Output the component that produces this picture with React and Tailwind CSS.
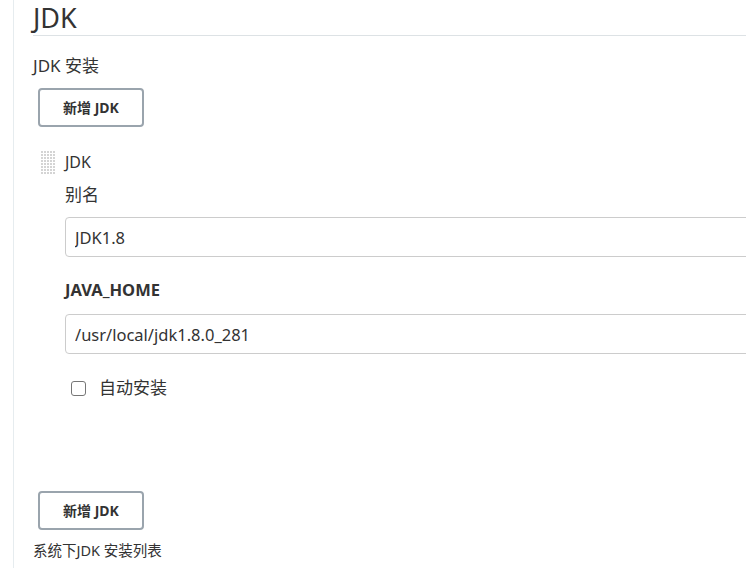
import React from 'react';

const DragHandle = () => (
  <svg width="14" height="24" viewBox="0 0 14 24" className="shrink-0">
    {Array.from({ length: 8 }).map((_, r) =>
      Array.from({ length: 5 }).map((_, c) => (
        <rect key={`${r}-${c}`} x={c * 3} y={r * 3} width="2" height="2" fill="#d4d4d4" />
      ))
    )}
  </svg>
);

const AddButton = () => (
  <button className="w-[106px] h-[39px] border-2 border-[#9aa4ad] rounded-[4px] bg-white text-[14px] font-bold text-[#333]">
    新增 JDK
  </button>
);

export default function App() {
  return (
    <div
      className="w-[746px] h-[568px] overflow-hidden bg-white flex text-[#333]"
      style={{ fontFamily: '"Noto Sans", "Noto Sans CJK SC", sans-serif' }}
    >
      <div className="w-[14px] shrink-0 border-r border-[#e6ecef]" />
      <div className="flex-1 pl-[19px] min-w-0">
        {/* Header */}
        <h1 className="text-[27px] leading-[35px] border-b border-[#dde2e5] w-[800px]">JDK</h1>
        <div className="mt-[19px] text-[17px] leading-[22px]">JDK 安装</div>
        <div className="mt-[11px] pl-[5px]">
          <AddButton />
        </div>

        {/* JDK entry */}
        <div className="mt-[24px] flex pl-[8px]">
          <DragHandle />
          <div className="ml-[10px] flex-1">
            <div className="text-[16px] leading-[22px]">JDK</div>
            <div className="mt-[11px] text-[17px] leading-[22px]">别名</div>
            <input
              readOnly
              value="JDK1.8"
              className="mt-[11px] w-[720px] h-[40px] border border-[#cccccc] rounded-[4px] px-[9px] text-[16.5px] text-[#333] outline-none"
            />
            <div className="mt-[22px] text-[16.5px] leading-[22px] font-bold">JAVA_HOME</div>
            <input
              readOnly
              value="/usr/local/jdk1.8.0_281"
              className="mt-[13px] w-[720px] h-[40px] border border-[#cccccc] rounded-[4px] px-[9px] text-[16.5px] text-[#333] outline-none"
            />
            <label className="mt-[23px] flex items-center pl-[6px]">
              <span className="w-[15px] h-[15px] border border-[#767676] rounded-[3px] bg-white" />
              <span className="ml-[13px] text-[17px] leading-[22px]">自动安装</span>
            </label>
          </div>
        </div>

        <div className="mt-[92px] pl-[5px]">
          <AddButton />
        </div>
        <div className="mt-[10px] text-[14.5px] leading-[20px]">系统下JDK 安装列表</div>
      </div>
    </div>
  );
}
